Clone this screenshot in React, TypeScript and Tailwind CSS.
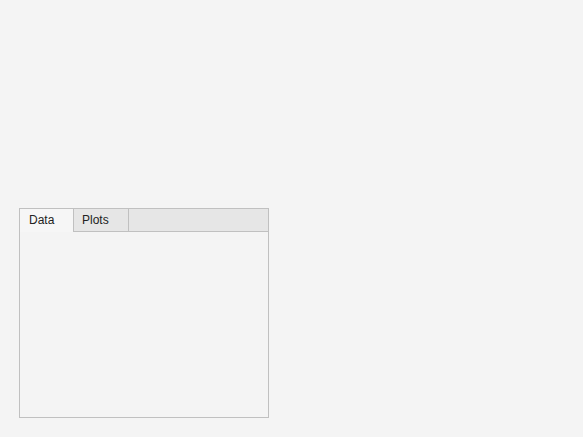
export default function App() {
  return (
    <div className="w-[583px] h-[437px] bg-[#f4f4f4] pt-[208px] pl-[19px]" style={{ fontFamily: '"Liberation Sans", Arial, sans-serif' }}>
      <div className="w-[250px] h-[210px] border border-[#c0c0c0] flex flex-col bg-[#f4f4f4]">
        <div className="flex h-[23px] text-[12px] text-[#222]">
          <div className="w-[54px] border-r border-[#c0c0c0] bg-[#f6f6f6] pl-[9px] pb-[1px] flex items-center">Data</div>
          <div className="w-[55px] border-r border-b border-[#c0c0c0] bg-[#e6e6e6] pl-[8px] flex items-center">Plots</div>
          <div className="flex-1 border-b border-[#c0c0c0] bg-[#e6e6e6]" />
        </div>
        <div className="flex-1" />
      </div>
    </div>
  );
}
